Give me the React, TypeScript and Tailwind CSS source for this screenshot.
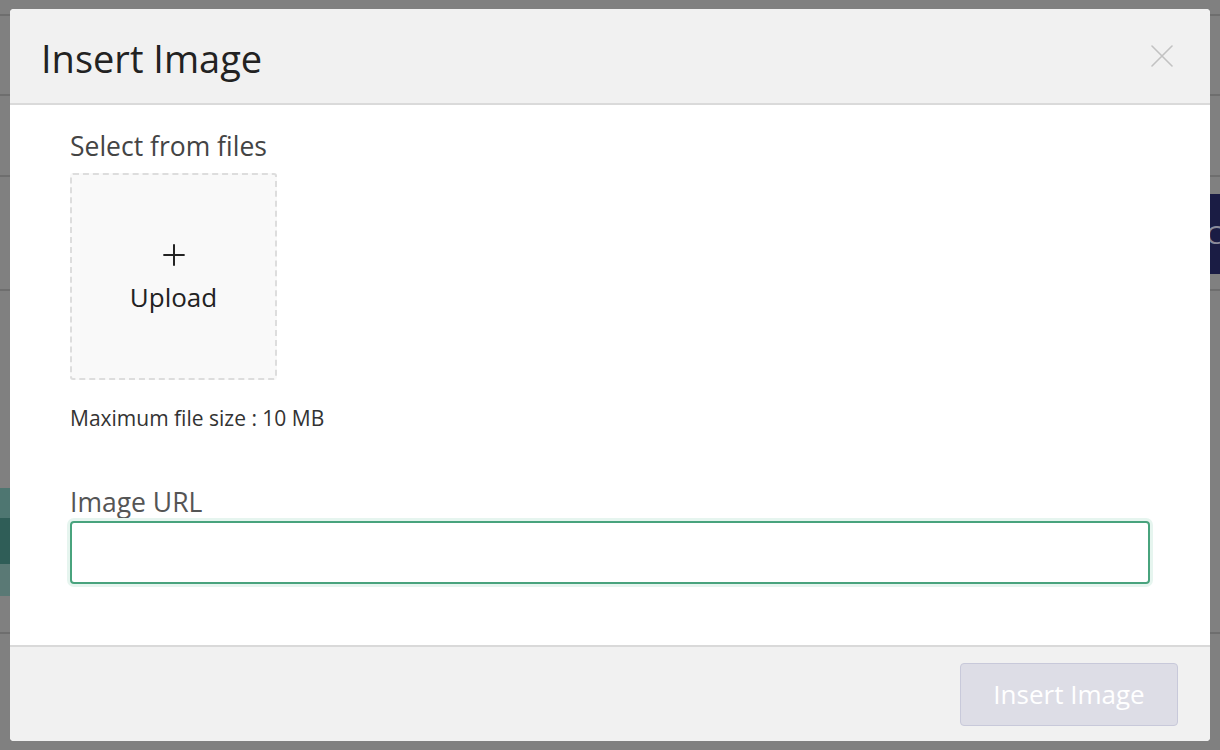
import { Plus } from 'lucide-react';

const font = { fontFamily: '"Open Sans", "Noto Sans", sans-serif' };

function Backdrop() {
  // underlying page, dimmed by the modal overlay
  return (
    <div className="flex h-[750px] w-[1220px] flex-col bg-[#808080]">
      <div className="h-[16px] border-b-2 border-[#6e6e6e]" />
      <div className="h-[80px] border-b-2 border-[#6e6e6e]" />
      <div className="h-[81px] border-b-2 border-[#6e6e6e]" />
      <div className="flex h-[114px] justify-end border-b-2 border-[#6e6e6e] pt-[17px]">
        <div className="flex h-[80px] w-[10px] items-center overflow-hidden bg-[#1a1c44] text-[26px] text-[#8a8a9a]">
          <span className="-ml-[4px]">Co</span>
        </div>
      </div>
      <div className="h-[197px]" />
      <div className="flex h-[108px] w-[10px] flex-col">
        <div className="h-[30px] bg-[#4e7671]" />
        <div className="h-[46px] bg-[#2f5d57]" />
        <div className="h-[32px] bg-[#5a7975]" />
      </div>
      <div className="h-[38px] border-b-2 border-[#6e6e6e]" />
    </div>
  );
}

function CloseIcon() {
  return (
    <svg width="22" height="22" viewBox="0 0 22 22" fill="none" stroke="#c2c2c2" strokeWidth="1.6" strokeLinecap="round">
      <path d="M1 1L21 21M21 1L1 21" />
    </svg>
  );
}

export default function App() {
  return (
    <div className="relative h-[750px] w-[1220px] overflow-hidden" style={font}>
      <Backdrop />
      <div className="absolute left-[10px] top-[9px] flex h-[732px] w-[1200px] flex-col overflow-hidden rounded-[4px] bg-white">
        <header className="flex h-[96px] shrink-0 items-center justify-between border-b-2 border-[#dadada] bg-[#f1f1f1] pl-[31px] pr-[37px]">
          <h1 className="pt-[4px] text-[38px] leading-none text-[#222]">Insert Image</h1>
          <CloseIcon />
        </header>

        <div className="flex flex-1 flex-col px-[60px] pt-[23px]">
          <label className="text-[26.5px] leading-[36px] text-[#444]">Select from files</label>
          <button className="mt-[9px] flex h-[207px] w-[207px] flex-col items-center justify-center rounded-[3px] border-2 border-dashed border-[#dddddd] bg-[#f9f9f9] text-[#222]">
            <Plus className="h-[34px] w-[34px]" strokeWidth={1.4} />
            <span className="mt-[7px] text-[26px] leading-[36px]">Upload</span>
          </button>
          <p className="mt-[23px] text-[21px] leading-[30px] text-[#333]">Maximum file size : 10 MB</p>

          <label className="mt-[51px] text-[26.5px] leading-[36px] text-[#555]">Image URL</label>
          <input
            type="text"
            className="mt-[1px] h-[63px] w-[1080px] rounded-[4px] border-2 border-[#48a37d] px-3 text-[22px] shadow-[0_0_0_3px_#e6f5ef] outline-none"
          />
        </div>

        <footer className="flex h-[96px] shrink-0 items-center justify-end border-t-2 border-[#d9d9d9] bg-[#f1f1f1] pr-[32px]">
          <button className="h-[63px] w-[218px] rounded-[4px] border border-[#c8c9da] bg-[#dddde6] text-[26px] text-white">
            Insert Image
          </button>
        </footer>
      </div>
    </div>
  );
}
